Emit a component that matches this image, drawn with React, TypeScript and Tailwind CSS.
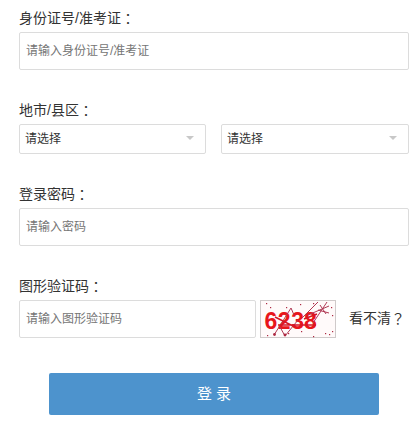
import type { ReactNode } from "react";

function Label({ children }: { children: ReactNode }) {
  return (
    <label className="block h-7 text-sm leading-[29px] text-[#333]">
      {children}
      <Mark>：</Mark>
    </label>
  );
}

// Full-width punctuation centred in its em box
function Mark({ children }: { children: ReactNode }) {
  return <span lang="zh-TW" className="align-[-1px] leading-none font-['Noto_Sans_CJK_TC',sans-serif]">{children}</span>;
}

function TextField({ placeholder, type = "text" }: { placeholder: string; type?: string }) {
  return (
    <input
      type={type}
      placeholder={placeholder}
      className="block h-[38px] w-full min-w-0 rounded-[2px] border border-[#dcdcdc] bg-white px-1.5 text-xs text-[#333] placeholder:text-[#757575]"
    />
  );
}

function SelectBox() {
  return (
    <button
      type="button"
      className="flex h-[30px] min-w-0 items-center justify-between rounded-[2px] border border-[#dcdcdc] bg-white pr-[11px] pl-[5px] text-xs text-[#333]"
    >
      <span>请选择</span>
      <span className="-mt-0.5 h-0 w-0 border-x-4 border-t-4 border-x-transparent border-t-[#c8c8c8]" />
    </button>
  );
}

const dots = [
  [6, 3], [10, 7], [26, 7], [40, 4], [53, 3], [71, 7], [72, 15],
  [7, 35], [28, 33], [41, 31], [53, 36], [65, 33], [69, 34], [72, 31],
];

function Captcha() {
  return (
    <svg width="76" height="38" viewBox="0 0 76 38" className="shrink-0">
      <rect x="0.5" y="0.5" width="75" height="37" fill="#fffafa" stroke="#cfcaca" />
      <text
        x="4.5 17.8 31.3 44"
        y="28.5"
        fontFamily="Liberation Sans, sans-serif"
        fontSize="23"
        fontWeight="700"
        fill="#e8151b"
      >
        6238
      </text>
      <g fill="none" stroke="#b03a55" strokeWidth="1">
        <path d="M14 35 L31 8 L34 15 M20 27 L25 36 L38 20 M42 18 L58 2 M53 23 L67 2 M48 15 L69 6 M60 5 L66 14 M58 10 L69 13" />
        <path d="M15 17 L35 27 M18 25 H56 M44 19 L57 14" stroke="#d51624" strokeWidth="1.5" />
      </g>
      <g fill="#ad2942">
        {dots.map(([x, y]) => (
          <rect key={`${x}-${y}`} x={x} y={y} width="1.2" height="1.2" />
        ))}
        <circle cx="14.5" cy="34.5" r="1.4" />
        <circle cx="25" cy="35" r="1.4" />
      </g>
    </svg>
  );
}

export default function App() {
  return (
    <form lang="zh-CN" className="flex h-[426px] w-[419px] flex-col bg-white pt-1 pr-[10px] pl-[19px] font-['Liberation_Sans','Noto_Sans_CJK_SC',sans-serif]">
      <div className="flex flex-col gap-[26px]">
        <div>
          <Label>身份证号/准考证</Label>
          <TextField placeholder="请输入身份证号/准考证" />
        </div>
        <div>
          <Label>地市/县区</Label>
          <div className="grid grid-cols-[187px_188px] gap-[15px]">
            <SelectBox />
            <SelectBox />
          </div>
        </div>
        <div>
          <Label>登录密码</Label>
          <TextField type="password" placeholder="请输入密码" />
        </div>
        <div>
          <Label>图形验证码</Label>
          <div className="flex h-[38px]">
            <div className="mr-1 w-[237px]">
              <TextField placeholder="请输入图形验证码" />
            </div>
            <Captcha />
            <span className="ml-[13px] text-sm leading-[37px] whitespace-nowrap text-[#333]">
              看不清<Mark>？</Mark>
            </span>
          </div>
        </div>
      </div>
      <button type="button" className="mt-[35px] ml-[30px] h-[42px] w-[330px] rounded-[2px] bg-[#4d93cd] text-[15px] text-white">
        登 录
      </button>
    </form>
  );
}
